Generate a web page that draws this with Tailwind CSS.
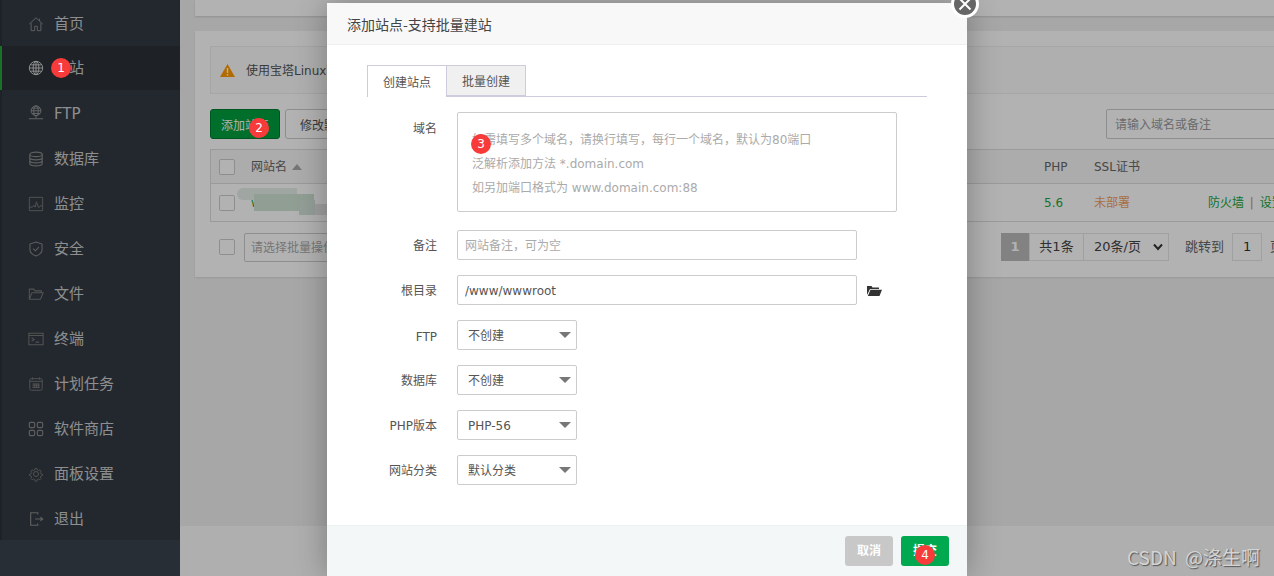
<!DOCTYPE html>
<html lang="zh-CN">

<head>
  <meta charset="UTF-8">
  <meta name="viewport" content="width=device-width, initial-scale=1.0">
  <title>添加站点</title>
  <script src="https://cdn.jsdelivr.net/npm/@tailwindcss/browser@4"></script>
</head>

<body class="relative w-[1274px] h-[576px] overflow-hidden bg-[#f0f0f0] font-['DejaVu_Sans','Noto_Sans_CJK_SC',sans-serif] text-xs">

  <div class="flex h-full">
    <!-- sidebar -->
    <aside class="w-[180px] shrink-0 h-full bg-[#38424c]">
      <nav class="h-[540px] pt-px bg-[#323a43] border-l-2 border-[#2c3036] text-[15px] text-[#cccccc]">
        <a class="flex items-center h-[45px] pl-[26px] gap-[10px]">
          <svg class="w-4 h-4 text-[#888]" viewBox="0 0 18 18" fill="none" stroke="currentColor" stroke-width="1.1"><path d="M1.500 9 9 2l7.500 7M3.500 8v8.500h4v-5h3v5h4V8M13 3v2.500"/></svg>
          <span class="pt-[2px]">首页</span>
        </a>
        <a class="flex items-center h-[44px] pl-[26px] gap-[10px] bg-[#2b3036] border-l-2 -ml-0.5 border-[#20a53a]">
          <svg class="w-4 h-4 text-[#ddd]" viewBox="0 0 18 18" fill="none" stroke="currentColor" stroke-width="1"><circle cx="9" cy="9" r="7.500"/><ellipse cx="9" cy="9" rx="3.200" ry="7.500"/><path d="M9 1.500v15M1.500 9h15M3 5.500h12M3 12.500h12"/></svg>
          <span class="pt-[2px]">网站</span>
        </a>
        <a class="flex items-center h-[46px] pl-[26px] gap-[10px]">
          <svg class="w-4 h-4 text-[#999]" viewBox="0 0 18 18" fill="none" stroke="currentColor" stroke-width="1"><circle cx="9" cy="6.500" r="5.500"/><ellipse cx="9" cy="6.500" rx="2.500" ry="5.500"/><path d="M3.500 6.500h11M4.500 3.500h9M4.500 9.500h9M9 12v3M1 15.500h16"/></svg>
          <span class="pt-[4px]">FTP</span>
        </a>
        <a class="flex items-center h-[45px] pl-[26px] gap-[10px]">
          <svg class="w-4 h-4 text-[#888]" viewBox="0 0 18 18" fill="none" stroke="currentColor" stroke-width="1.300"><ellipse cx="9" cy="3.800" rx="7" ry="2.600"/><path d="M2 3.800v10.400c0 1.400 3.100 2.600 7 2.600s7-1.200 7-2.600V3.800M2 7.300c0 1.400 3.100 2.600 7 2.600s7-1.200 7-2.600M2 10.800c0 1.400 3.100 2.600 7 2.600s7-1.200 7-2.600"/></svg>
          <span class="pt-[2px]">数据库</span>
        </a>
        <a class="flex items-center h-[45px] pl-[26px] gap-[10px]">
          <svg class="w-4 h-4 text-[#777]" viewBox="0 0 18 18" fill="none" stroke="currentColor" stroke-width="1.100"><path d="M1.500 1.500h15v15h-15zM1.500 12.500h3.500l1.500-2 1.500 2 1.500-6 2 6h1.500l1-1.500h2"/></svg>
          <span class="pt-[2px]">监控</span>
        </a>
        <a class="flex items-center h-[45px] pl-[26px] gap-[10px]">
          <svg class="w-4 h-4 text-[#888]" viewBox="0 0 18 18" fill="none" stroke="currentColor" stroke-width="1.200"><path d="M9 1.200 15.800 3.500v6c0 3.600-3 6-6.800 7.300C5.200 15.500 2.200 13.100 2.200 9.500v-6zM5.800 8.500l2.500 2.500 4-4"/></svg>
          <span class="pt-[2px]">安全</span>
        </a>
        <a class="flex items-center h-[45px] pl-[26px] gap-[10px]">
          <svg class="w-4 h-4 text-[#777]" viewBox="0 0 18 18" fill="none" stroke="currentColor" stroke-width="1.200"><path d="M1.500 15V3.500h5l1.500 2h7v2M1.500 15h12.500l3-7.500H4.500z"/></svg>
          <span class="pt-[2px]">文件</span>
        </a>
        <a class="flex items-center h-[45px] pl-[26px] gap-[10px]">
          <svg class="w-4 h-4 text-[#777]" viewBox="0 0 18 18" fill="none" stroke="currentColor" stroke-width="1.200"><path d="M1 2.500h16v13H1zM1.500 5h15M4 7.500l3 2-3 2M8.500 12.500h4"/></svg>
          <span class="pt-[2px]">终端</span>
        </a>
        <a class="flex items-center h-[45px] pl-[26px] gap-[10px]">
          <svg class="w-4 h-4 text-[#777]" viewBox="0 0 18 18" fill="none" stroke="currentColor" stroke-width="1.100"><rect x="2" y="3" width="14" height="13" rx="2"/><path d="M5 1.500V4M13 1.500V4M2 6h14M5 9h8M5 11h8M5 13h8M7 8.500v5M9.500 8.500v5M12 8.500v5"/></svg>
          <span class="pt-[2px]">计划任务</span>
        </a>
        <a class="flex items-center h-[45px] pl-[26px] gap-[10px]">
          <svg class="w-4 h-4 text-[#888]" viewBox="0 0 18 18" fill="none" stroke="currentColor" stroke-width="1.300"><rect x="1.500" y="1.500" width="6" height="6" rx="1.500"/><rect x="10.500" y="1.500" width="6" height="6" rx="1.500"/><rect x="1.500" y="10.500" width="6" height="6" rx="1.500"/><rect x="10.500" y="10.500" width="6" height="6" rx="1.500"/></svg>
          <span class="pt-[2px]">软件商店</span>
        </a>
        <a class="flex items-center h-[45px] pl-[26px] gap-[10px]">
          <svg class="w-4 h-4 text-[#777]" viewBox="0 0 18 18" fill="none" stroke="currentColor" stroke-width="1.100"><circle cx="9" cy="9" r="2.800"/><path d="M7.800 2h2.400l.4 2 1.500.7 1.800-1 1.600 1.600-1 1.800.7 1.500 2 .4v2l-2 .4-.7 1.500 1 1.800-1.600 1.600-1.800-1-1.500.7-.4 2H7.800l-.4-2-1.500-.7-1.800 1-1.600-1.600 1-1.800-.7-1.500-2-.4v-2l2-.4.7-1.500-1-1.800 1.600-1.600 1.800 1 1.500-.7z" transform="translate(1 1) scale(.89)"/></svg>
          <span class="pt-[2px]">面板设置</span>
        </a>
        <a class="flex items-center h-[45px] pl-[26px] gap-[10px]">
          <svg class="w-4 h-4 text-[#888]" viewBox="0 0 18 18" fill="none" stroke="currentColor" stroke-width="1.300"><path d="M11 4V2H3v14h8v-2M8 9h8.500M14 7l2.500 2-2.500 2"/></svg>
          <span class="pt-[2px]">退出</span>
        </a>
      </nav>
    </aside>

    <!-- page behind the dialog -->
    <main class="flex-1 min-w-0 h-full flex flex-col overflow-hidden text-[#666]">
      <div class="flex-1 pl-[15px]">
        <div class="h-4 w-[1100px] bg-white shadow-[0_1px_2px_rgba(0,0,0,.15)]"></div>
        <section class="mt-[15px] h-[246px] w-[1100px] bg-white p-[15px] shadow-[0_1px_2px_rgba(0,0,0,.1)]">
          <div class="h-[48px] flex items-center pl-[9px] gap-[11px] border border-[#eee] bg-[#fbfbfb]">
            <svg class="w-[15px] h-[13px]" viewBox="0 0 15 13"><path d="M7.500 0 15 13H0z" fill="#ff9a00"/><path d="M6.800 4h1.400v5H6.800zM6.800 10h1.400v1.500H6.800z" fill="#fff"/></svg>
            <span class="pt-[2px] text-[#555]">使用宝塔Linux面板创建站点时会自动创建权限配置</span>
          </div>
          <div class="mt-[15px] flex items-center gap-[5px] h-[30px]">
            <button class="w-[70px] h-[30px] pt-[3px] shrink-0 whitespace-nowrap rounded-[3px] bg-[#00a040] border border-[#007a30] text-white">添加站点</button>
            <button class="w-[90px] h-[30px] pt-[3px] shrink-0 whitespace-nowrap rounded-[3px] bg-white border border-[#ccc] text-[#555]">修改默认页</button>
            <div class="ml-[726px] h-[30px] w-[200px] pt-[2px] shrink-0 rounded-[2px] border border-[#ccc] flex items-center pl-2 text-[#999]">请输入域名或备注</div>
          </div>
          <div class="mt-2.5 border border-[#ddd] w-[1070px] overflow-hidden">
            <div class="flex items-center h-[34px] bg-[#f6f6f6] border-b border-[#ddd]">
              <span class="ml-2 w-4 h-4 shrink-0 rounded-[2px] border border-[#ccc] bg-white"></span>
              <span class="ml-4 w-[793px] shrink-0 flex items-center gap-[5px]">网站名<i class="w-0 h-0 border-x-[5px] border-x-transparent border-b-[6px] border-b-[#aaa]"></i></span>
              <span class="w-[50px] shrink-0">PHP</span>
              <span class="shrink-0">SSL证书</span>
            </div>
            <div class="relative flex items-center h-[37px]">
              <span class="ml-2 w-4 h-4 shrink-0 rounded-[2px] border border-[#ccc]"></span>
              <span class="ml-4 w-[793px] shrink-0 text-[#20a53a]">w</span>
              <span class="w-[50px] shrink-0 text-[#20a53a]">5.6</span>
              <span class="w-[114px] shrink-0 text-[#f0a060]">未部署</span>
              <span class="shrink-0 text-[#20a53a] whitespace-nowrap">防火墙 <span class="text-[#cc9050] mx-0.5">|</span> 设置</span>
              <div class="absolute left-[26px] top-[4px] w-[60px] h-[12px] rounded-l-full bg-[#e6efe8]"></div>
              <div class="absolute left-[43px] top-[10px] w-[60px] h-[17px] bg-[#cfe3d5]"></div>
              <div class="absolute left-[88px] top-[16px] w-[16px] h-[15px] bg-[#d5e3da]"></div>
              <div class="absolute left-[104px] top-[20px] w-[16px] h-[11px] bg-[#e6e6e6]"></div>
            </div>
          </div>
          <div class="mt-[10px] flex items-center h-[30px] w-[1070px]">
            <span class="ml-[9px] w-4 h-4 shrink-0 rounded-[2px] border border-[#ccc]"></span>
            <div class="ml-[9px] w-[300px] h-[29px] pt-[2px] shrink-0 rounded-[2px] border border-[#ccc] flex items-center pl-[6px] text-[#aaa]">请选择批量操作</div>
            <div class="ml-[457px] flex items-center h-7 shrink-0 text-[13px] whitespace-nowrap">
              <span class="w-7 h-7 bg-[#bbb] text-white font-bold flex items-center justify-center">1</span>
              <span class="w-[55px] h-7 border border-[#e5e5e5] flex items-center justify-center text-[#444]">共1条</span>
              <span class="w-[85px] h-7 border border-l-0 border-[#e5e5e5] flex items-center justify-between pl-2.5 pr-[5px] text-[#444]">20条/页
                <svg class="w-2.5 h-2" viewBox="0 0 10 8" fill="none" stroke="#333" stroke-width="2"><path d="M1 1.500 5 6l4-4.500"/></svg>
              </span>
              <span class="ml-4">跳转到</span>
              <span class="ml-2 w-[30px] h-7 border border-[#e5e5e5] flex items-center justify-center text-[#333]">1</span>
              <span class="ml-2">页</span>
            </div>
          </div>
        </section>
      </div>
      <footer class="h-[50px] shrink-0 bg-[#fbfbfb]"></footer>
    </main>
  </div>

  <!-- dim layer -->
  <div class="absolute inset-0 bg-black/30"></div>

  <!-- dialog -->
  <div class="absolute left-[327px] top-[3px] w-[640px] h-[573px] flex flex-col bg-white shadow-[0_0_30px_rgba(0,0,0,.3)]">
    <div class="h-[42px] shrink-0 flex items-center pl-5 bg-[#f8f8f8] border-b border-[#eee] text-sm text-[#444] font-['Noto_Sans_CJK_SC',sans-serif]">添加站点-支持批量建站</div>

    <div class="flex-1 pt-5 pl-10 pr-10">
      <div class="flex h-8 border-b border-[#ccd] text-[#555]">
        <span class="w-[80px] h-8 pt-[3px] flex items-center justify-center bg-white border border-b-0 border-[#ccd]">创建站点</span>
        <span class="w-[79px] h-[31px] pt-[3px] flex items-center justify-center bg-[#f0f0f0] border border-l-0 border-[#ccd]">批量创建</span>
      </div>

      <div class="mt-[15px] flex flex-col -ml-10">
        <div class="flex gap-5">
          <label class="w-[110px] pt-[9px] text-right text-[#555]">域名</label>
          <div class="w-[440px] h-[100px] rounded-[2px] border border-[#ccc] pl-[14px] pt-[15px] text-[#aaa] leading-6">
            <p>如需填写多个域名，请换行填写，每行一个域名，默认为80端口</p>
            <p>泛解析添加方法 *.domain.com</p>
            <p>如另加端口格式为 www.domain.com:88</p>
          </div>
        </div>
        <div class="mt-[18px] flex items-center gap-5">
          <label class="w-[110px] pt-[2px] text-right text-[#555]">备注</label>
          <input class="w-[400px] h-[30px] rounded-[2px] border border-[#ccc] pl-[7px] pt-[2px] outline-none placeholder:text-[#aaa]" placeholder="网站备注，可为空">
        </div>
        <div class="mt-[15px] flex items-center gap-5">
          <label class="w-[110px] pt-[2px] text-right text-[#555]">根目录</label>
          <input class="w-[400px] h-[30px] rounded-[2px] border border-[#ccc] pl-[7px] pt-[2px] outline-none text-[#555]" value="/www/wwwroot">
          <svg class="-ml-[10px] w-[15px] h-[11px]" viewBox="0 0 15 11"><path d="M0 10V1h4.500l1 1.500H12V4H3z" fill="#333"/><path d="M3.500 4.800H15L12.500 11H.8z" fill="#333"/></svg>
        </div>
        <div class="mt-[15px] flex items-center gap-5">
          <label class="w-[110px] pt-[4px] text-right text-[#555]">FTP</label>
          <div class="w-[120px] h-[30px] rounded-[2px] border border-[#ccc] flex items-center justify-between pl-[10px] pr-[5px] text-[#555]"><span class="pt-[2px]">不创建</span>
            <i class="w-0 h-0 border-x-[6px] border-x-transparent border-t-[6px] border-t-[#777]"></i>
          </div>
        </div>
        <div class="mt-[15px] flex items-center gap-5">
          <label class="w-[110px] pt-[2px] text-right text-[#555]">数据库</label>
          <div class="w-[120px] h-[30px] rounded-[2px] border border-[#ccc] flex items-center justify-between pl-[10px] pr-[5px] text-[#555]"><span class="pt-[2px]">不创建</span>
            <i class="w-0 h-0 border-x-[6px] border-x-transparent border-t-[6px] border-t-[#777]"></i>
          </div>
        </div>
        <div class="mt-[15px] flex items-center gap-5">
          <label class="w-[110px] pt-[2px] text-right text-[#555]">PHP版本</label>
          <div class="w-[120px] h-[30px] rounded-[2px] border border-[#ccc] flex items-center justify-between pl-[10px] pr-[5px] text-[#555]"><span class="pt-[2px]">PHP-56</span>
            <i class="w-0 h-0 border-x-[6px] border-x-transparent border-t-[6px] border-t-[#777]"></i>
          </div>
        </div>
        <div class="mt-[15px] flex items-center gap-5">
          <label class="w-[110px] pt-[2px] text-right text-[#555]">网站分类</label>
          <div class="w-[120px] h-[30px] rounded-[2px] border border-[#ccc] flex items-center justify-between pl-[10px] pr-[5px] text-[#555]"><span class="pt-[2px]">默认分类</span>
            <i class="w-0 h-0 border-x-[6px] border-x-transparent border-t-[6px] border-t-[#777]"></i>
          </div>
        </div>
      </div>
    </div>

    <div class="h-[51px] shrink-0 flex items-start justify-end gap-2 pt-[10px] pr-[18px] bg-[#f4f7f8] border-t border-[#eef1f2]">
      <button class="w-12 h-[30px] rounded-[3px] bg-[#c8c8c8] text-white font-bold">取消</button>
      <button class="w-12 h-[30px] rounded-[3px] bg-[#00a94f] text-white font-bold">提交</button>
    </div>

    <!-- close button -->
    <span class="absolute -top-[13px] -right-[12px] w-[22px] h-[22px] box-content rounded-full border-[3px] border-white bg-[#666] flex items-center justify-center">
      <svg class="w-[14px] h-[14px]" viewBox="0 0 14 14" fill="none" stroke="#fff" stroke-width="2"><path d="M1.500 1.500l11 11M12.500 1.500l-11 11"/></svg>
    </span>
  </div>

  <!-- numbered annotations -->
  <span class="absolute left-[51px] top-[58px] w-5 h-5 rounded-full bg-[#f73a3a] text-white flex items-center justify-center">1</span>
  <span class="absolute left-[249px] top-[118px] w-5 h-5 rounded-full bg-[#f73a3a] text-white flex items-center justify-center">2</span>
  <span class="absolute left-[471px] top-[134px] w-5 h-5 rounded-full bg-[#f73a3a] text-white flex items-center justify-center">3</span>
  <span class="absolute left-[915px] top-[545px] w-5 h-5 rounded-full bg-[#f73a3a] text-white flex items-center justify-center">4</span>

  <!-- watermark -->
  <span class="absolute left-[1127px] top-[543px] text-[19px] leading-7 text-[#d4d4d4] whitespace-nowrap font-['Noto_Sans_CJK_SC',sans-serif] [word-spacing:4px] [text-shadow:1px_1px_1px_#555]">CSDN @涤生啊</span>

</body>

</html>
